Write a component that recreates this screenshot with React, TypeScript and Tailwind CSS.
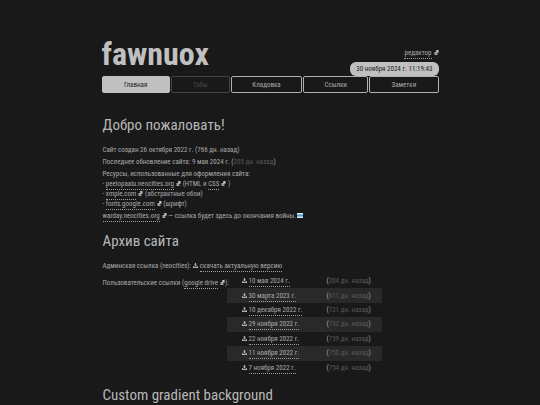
import React from "react";

const External = () => (
  <svg viewBox="0 0 10 10" className="ml-0.5 inline-block size-[5px] align-baseline" fill="#c4c4c4" aria-hidden="true">
    <path d="M1 4h3v2l1 1h2v3H1z" opacity=".8" />
    <path d="M4 0h5v6L7 5 5 7 3 5l2-2z" />
  </svg>
);

const Download = () => (
  <svg viewBox="0 0 12 12" className="mr-0.5 inline-block size-[5px] align-baseline" fill="#b0b0b0" aria-hidden="true">
    <path d="M4.5 0h3v4H10L6 8 2 4h2.500z" />
    <path d="M0 7h2v2h8V7h2v5H0z" />
  </svg>
);

const Flag = () => (
  <svg viewBox="0 0 6 5" className="ml-px inline-block h-[5px] w-[6px] align-baseline" role="img" aria-label="бело-сине-белый флаг">
    <rect width="6" height="5" fill="#dfe8ee" />
    <rect y="1.500" width="6" height="2" fill="#3f9bd0" />
  </svg>
);

const TextLink = ({ href, children }: { href: string; children: React.ReactNode }) => (
  <a href={href} className="border-b border-dotted border-[#a0a0a0] pb-px">{children}</a>
);

const Ago = ({ days }: { days: number }) => (
  <>(<span className="text-[#585858]">{days} дн. назад</span>)</>
);

const tabs = [
  { name: "Главная", style: "basis-[68px] border-[#c0c0c0] bg-[#c0c0c0] text-[#222]" },
  { name: "Табы", style: "basis-[59px] border-[#444] text-[#484848]", disabled: true },
  { name: "Кладовка", style: "basis-[71px] border-[#b0b0b0]" },
  { name: "Ссылки", style: "basis-[65px] border-[#b0b0b0]" },
  { name: "Заметки", style: "basis-[69px] border-[#b0b0b0]" },
];

const archive = [
  { date: "10 мая 2024 г.", days: 204 },
  { date: "30 марта 2023 г.", days: 611 },
  { date: "10 декабря 2022 г.", days: 721 },
  { date: "29 ноября 2022 г.", days: 732 },
  { date: "22 ноября 2022 г.", days: 739 },
  { date: "11 ноября 2022 г.", days: 750 },
  { date: "7 ноября 2022 г.", days: 754 },
];

const Heading = ({ children }: { children: React.ReactNode }) => (
  <h2 className="text-[15px] leading-6 text-[#b8b8b8]">{children}</h2>
);

export default function App() {
  return (
    <div className="h-screen overflow-hidden bg-[#191919] px-4 pt-8 font-['Roboto_Condensed','Roboto',sans-serif] text-[7px] leading-[10px] text-[#aaa]">
      <div className="mx-auto max-w-[337px]">
        <header>
          <div className="flex items-end justify-between">
            <h1 className="text-[32px] font-bold leading-[44px] text-[#c0c0c0]">fawnuox</h1>
            <div className="flex flex-col items-end gap-1">
              <div><TextLink href="#editor">редактор</TextLink><External /></div>
              <time className="rounded-md bg-[#c0c0c0] px-[6px] py-0.5 text-[#222]">30 ноября 2024 г. 11:19:43</time>
            </div>
          </div>
          <nav className="flex gap-px">
            {tabs.map((tab) => (
              <button key={tab.name} disabled={tab.disabled} className={`h-[17px] grow rounded-xs border ${tab.style}`}>
                {tab.name}
              </button>
            ))}
          </nav>
        </header>

        <main className="px-px pt-5">
          <Heading>Добро пожаловать!</Heading>
          <p className="mt-2">Сайт создан 26 октября 2022 г. (766 дн. назад)</p>
          <p className="mt-0.5">Последнее обновление сайта: 9 мая 2024 г. <Ago days={205} /></p>
          <p className="mt-0.5">Ресурсы, использованные для оформления сайта:</p>
          <ul>
            <li>- <TextLink href="#peelopaalu">peelopaalu.neocities.org</TextLink><External /> (HTML и <TextLink href="#css">CSS</TextLink><External /> )</li>
            <li>- <TextLink href="#xmple">xmple.com</TextLink><External /> (абстрактные обои)</li>
            <li>- <TextLink href="#fonts">fonts.google.com</TextLink><External /> (шрифт)</li>
          </ul>
          <p className="mt-0.5"><TextLink href="#warday">warday.neocities.org</TextLink><External /> — ссылка будет здесь до окончания войны.<Flag /></p>

          <div className="mt-2"><Heading>Архив сайта</Heading></div>
          <p className="mt-2">Админская ссылка (neocities): <Download /><TextLink href="#latest">скачать актуальную версию</TextLink></p>
          <div className="mt-[3px] flex">
            <p className="w-[124px] shrink-0 whitespace-nowrap pt-1">Пользовательские ссылки (<TextLink href="#drive">google drive</TextLink><External />):</p>
            <table className="h-[101px] w-[155px]">
              <tbody>
                {archive.map((item) => (
                  <tr key={item.date} className="even:bg-[#292929]">
                    <td className="whitespace-nowrap pl-[15px]"><Download /><TextLink href="#archive">{item.date}</TextLink></td>
                    <td className="w-[55px] whitespace-nowrap"><Ago days={item.days} /></td>
                  </tr>
                ))}
              </tbody>
            </table>
          </div>

          <div className="mt-2"><Heading>Custom gradient background</Heading></div>
        </main>
      </div>
    </div>
  );
}
